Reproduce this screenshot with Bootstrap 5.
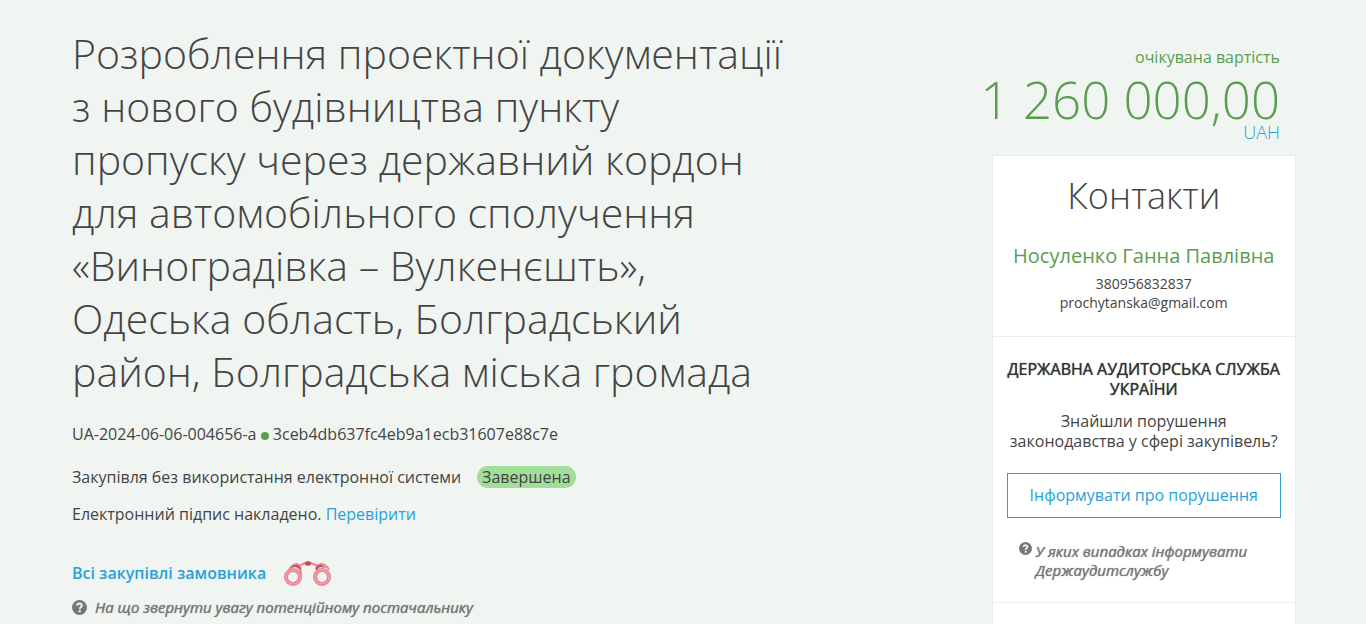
<!DOCTYPE html>
<html lang="uk">
<head>
<meta charset="utf-8">
<meta name="viewport" content="width=device-width, initial-scale=1">
<title>Закупівля UA-2024-06-06-004656-a</title>
<link href="https://cdn.jsdelivr.net/npm/bootstrap@5.3.0/dist/css/bootstrap.min.css" rel="stylesheet">
<style>
  body { background: #f0f5f2; color: #444; font-family: "Open Sans", sans-serif; font-size: 16px; line-height: 20px; }
  a { color: #2b9fd9; text-decoration: none; }
  a:hover { text-decoration: underline; }
  .page-wrap { max-width: 1226px; }
  .main-col { padding: 27px 0 0 2px; }
  .tender-title { max-width: 78%; margin-bottom: 26px; font-size: 41px; font-weight: 300; line-height: 53px; }
  .tender-green { color: #5b9d50; }
  .tender-id { margin-bottom: 22px; }
  .tender-id svg { vertical-align: 0; }
  .status-pill { background: #a2de99; border-radius: 11px; line-height: 22px; padding: 0 5px; }
  .strong-text { text-shadow: 0 0 1px currentColor; }
  .hint { color: #777; font-size: 15px; font-style: italic; line-height: 19px; }
  .hint:hover { color: #555; }
  .price-block { padding-top: 47px; }
  .price-label { margin-bottom: 6px; }
  .price { font-size: 51px; font-weight: 300; line-height: 52px; }
  .currency { color: #2b9fd9; font-size: 18px; font-weight: 300; line-height: 14px; }
  .side-col { padding-left: 2px; }
  .side-card { border: 1px solid #ebebeb; background: #fff; }
  .side-card section + section { border-top: 1px solid #ebebeb; }
  .side-card h2 { font-size: 36px; font-weight: 300; line-height: 40px; }
  .person { font-size: 20px; line-height: 24px; margin-bottom: 6px; }
  .contact-lines { font-size: 14px; line-height: 19px; }
  .audit { padding: 22px 14px; }
  .audit-title { color: #333; font-size: 16px; font-weight: 400; line-height: 20px; }
  .audit-question { margin-bottom: 22px; }
  .btn-report { border: 1px solid #2b9fd9; border-radius: 0; color: #2b9fd9; line-height: 20px; padding: 11px 0 12px; margin-bottom: 24px; }
  .next-block { min-height: 24px; }
</style>
</head>
<body>
<main class="container-fluid page-wrap px-0">
  <div class="row g-0">
    <div class="col-9 main-col">
      <h1 class="tender-title">Розроблення проектної документації з нового будівництва пункту пропуску через державний кордон для автомобільного сполучення «Виноградівка – Вулкенєшть», Одеська область, Болградський район, Болградська міська громада</h1>
      <p class="tender-id">UA-2024-06-06-004656-a <svg width="8" height="8" viewBox="0 0 8 8" aria-hidden="true"><circle cx="4" cy="4" r="4" fill="#5b9d50"/></svg> 3ceb4db637fc4eb9a1ecb31607e88c7e</p>
      <p class="d-flex align-items-center gap-3 mb-3">Закупівля без використання електронної системи <span class="status-pill">Завершена</span></p>
      <p class="mb-4 pb-2">Електронний підпис накладено. <a href="#">Перевірити</a></p>
      <div class="d-flex align-items-center mb-2 pt-1 pb-1">
        <a class="fw-semibold" href="#">Всі закупівлі замовника</a>
        <svg class="ms-3" width="54" height="26" viewBox="2 0 54 26" fill="none" aria-hidden="true">
          <g stroke="#ee8291">
            <path d="M9 10C11 6 14 4 17 4C20 5 21 9 21 15M49 10C47 6 44 4 41 4C37 5 37 9 37 15" stroke-width="2"/>
            <path d="M19 6L25 3H31L38 6" stroke-width="2"/>
            <circle cx="13" cy="17" r="7" stroke-width="4"/>
            <circle cx="42" cy="17" r="7" stroke-width="4"/>
          </g>
          <g stroke="#f3b0b8" stroke-width="1">
            <circle cx="13" cy="17" r="7"/>
            <circle cx="42" cy="17" r="7"/>
          </g>
          <path d="M10 8L14 5H18L21 8L20 10L16 7ZM46 8L42 5H38L35 8L36 10L40 7ZM25 2L28 1L31 2V5L28 6L25 5Z" fill="#c9505f"/>
        </svg>
      </div>
      <a class="hint strong-text d-flex align-items-center gap-2" href="#">
        <svg width="15" height="15" viewBox="0 0 14 14" aria-hidden="true"><circle cx="7" cy="7" r="7" fill="#777"/><path d="M4.800 5.200Q5 3.300 7 3.300T9.200 5.200C9.200 6.800 7.200 6.600 7.200 8.300" fill="none" stroke="#f0f5f2" stroke-width="1.800"/><rect x="6.200" y="9.500" width="2" height="2" fill="#f0f5f2"/></svg>
        На що звернути увагу потенційному постачальнику
      </a>
    </div>
    <aside class="col-3 side-col">
      <div class="price-block text-end pe-3 mb-3 tender-green">
        <div class="price-label">очікувана вартість</div>
        <div class="price d-flex justify-content-end text-nowrap">1 260 000,00</div>
        <div class="currency">UAH</div>
      </div>
      <div class="side-card text-center">
        <section class="px-3 pt-3 pb-4">
          <h2 class="mt-1 mb-4">Контакти</h2>
          <div class="person tender-green pt-1 text-nowrap">Носуленко Ганна Павлівна</div>
          <div class="contact-lines">380956832837<br>prochytanska@gmail.com</div>
        </section>
        <section class="audit">
          <h3 class="audit-title strong-text mb-2 pb-1">ДЕРЖАВНА АУДИТОРСЬКА СЛУЖБА УКРАЇНИ</h3>
          <p class="audit-question">Знайшли порушення законодавства у сфері закупівель?</p>
          <button type="button" class="btn btn-report w-100">Інформувати про порушення</button>
          <a class="hint strong-text d-flex gap-1 text-start px-2" href="#">
            <svg class="flex-shrink-0 ms-1" width="13" height="13" viewBox="0 0 14 14" aria-hidden="true"><circle cx="7" cy="7" r="7" fill="#777"/><path d="M4.800 5.200Q5 3.300 7 3.300T9.200 5.200C9.200 6.800 7.200 6.600 7.200 8.300" fill="none" stroke="#fff" stroke-width="1.800"/><rect x="6.200" y="9.500" width="2" height="2" fill="#fff"/></svg>
            <span>У яких випадках інформувати Держаудитслужбу</span>
          </a>
        </section>
        <section class="next-block"></section>
      </div>
    </aside>
  </div>
</main>
<script src="https://cdn.jsdelivr.net/npm/bootstrap@5.3.0/dist/js/bootstrap.bundle.min.js"></script>
</body>
</html>
